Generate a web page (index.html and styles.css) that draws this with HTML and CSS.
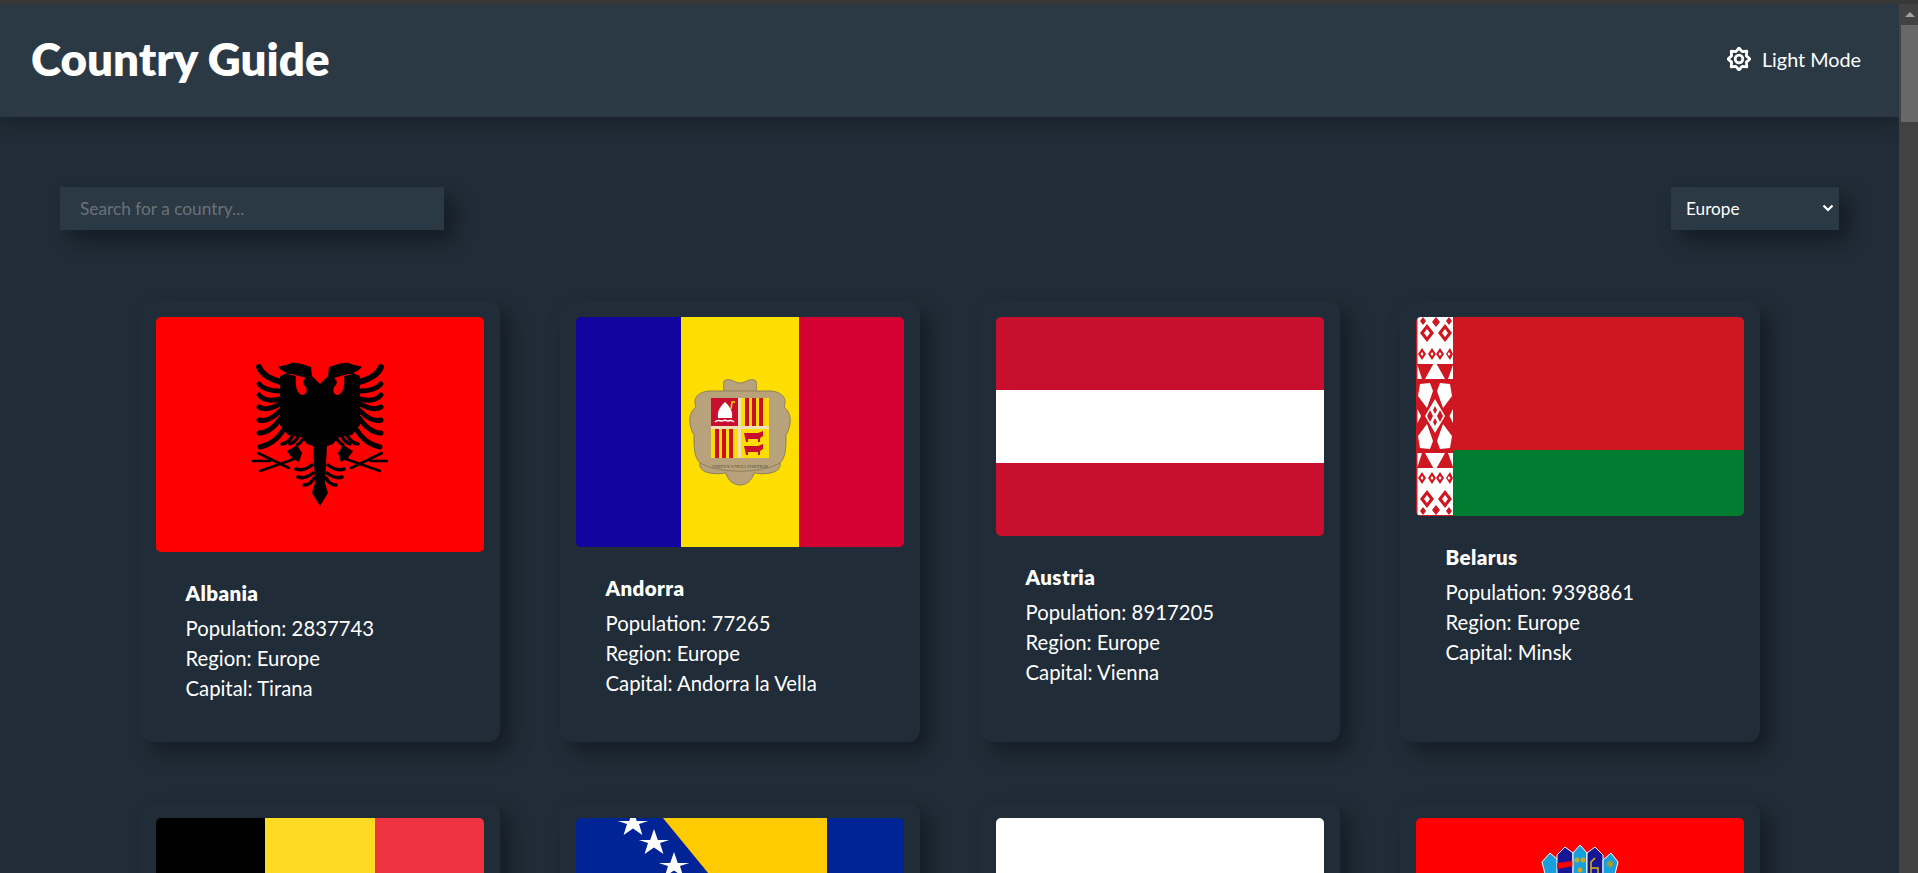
FILE: index.html
```html
<!DOCTYPE html>
<html lang="en">
<head>
<meta charset="utf-8">
<title>Country Guide</title>
<link rel="stylesheet" href="styles.css">
</head>
<body>
<div class="chrome-strip"></div>
<div class="viewport">
  <div class="page">
    <header class="site-header">
      <h1 class="site-title">Country Guide</h1>
      <button class="mode-toggle" type="button">
        <svg class="mode-icon" viewBox="0 0 24 24" aria-hidden="true"><path d="M12 1L15.100 4.600 19.800 4.200 19.400 8.900 23 12 19.400 15.100 19.800 19.800 15.100 19.400 12 23 8.900 19.400 4.200 19.800 4.600 15.100 1 12 4.600 8.900 4.200 4.200 8.900 4.600Z"/><circle cx="12" cy="12" r="3.800"/></svg>
        <span>Light Mode</span>
      </button>
    </header>
    <main class="content">
      <div class="controls">
        <input class="search" type="text" placeholder="Search for a country...">
        <div class="select-box"><span>Europe</span>
          <svg class="chevron" viewBox="0 0 12 8" aria-hidden="true"><path d="M1.500 1.500L6 6l4.500-4.500"/></svg>
        </div>
      </div>
      <div class="grid">
        <article class="card">
          <svg class="flag" viewBox="0 0 328 235" aria-hidden="true">
            <rect width="328" height="235" fill="#f00"/>
            <g id="eagle-half" class="eagle">
              <path class="eagle-fill" d="M164 67 L156 59 L155 50 L146 47 L137 45.500 L130 48 L122 49.500 L125 53 L131 56 L124 59 L124 108 L132 118 L145 120 L151 127 L157 129 L159 166 L156 176 L164 189Z"/>
              <path class="eagle-cut" d="M131 57 L140 59 C139 66 140 76 146 78 C151 78 152 72 149 69 C146 66 147 63 150 61 L136 57Z"/>
              <path class="eagle-fill" d="M131 134 L141 128 L146 136 L143 145 L136 141Z"/>
              <path class="feather f1" d="M103 50 C106 58 114 62 125 65"/>
              <path class="feather" d="M103 67 C108 73 116 74 124 74"/>
              <path class="feather" d="M103 78 C108 84 116 84 124 82"/>
              <path class="feather" d="M103 90 C110 94 118 90 124 87"/>
              <path class="feather" d="M103 103 C110 105 118 100 124 94"/>
              <path class="feather" d="M103 116 C112 116 120 108 125 101"/>
              <path class="feather" d="M104 130 C114 128 122 122 128 112"/>
              <path class="feather small" d="M126 127 C132 126 136 121 138 116"/>
              <path class="feather small" d="M134 127 C139 125 142 121 143 117"/>
              <path class="feather small" d="M141 128 C145 126 148 121 148 118"/>
              <path class="leg" d="M141 141 L104 154 M102 136 L133 151 M97 144 L114 144"/>
              <path class="feather small" d="M140 152 C146 154 151 152 156 148"/>
              <path class="feather small" d="M142 160 C148 162 152 160 157 156"/>
              <path class="feather small" d="M148 168 C152 168 156 165 158 161"/>
            </g>
            <use href="#eagle-half" transform="matrix(-1 0 0 1 328 0)"/>
          </svg>
          <div class="card-body">
            <h2 class="name">Albania</h2>
            <p class="fact">Population: 2837743</p>
            <p class="fact">Region: Europe</p>
            <p class="fact">Capital: Tirana</p>
          </div>
        </article>
        <article class="card">
          <svg class="flag" viewBox="0 0 328 230" aria-hidden="true">
            <rect width="105" height="230" fill="#10069f"/>
            <rect x="105" width="118" height="230" fill="#fedd00"/>
            <rect x="223" width="105" height="230" fill="#d50032"/>
            <path fill="#b7a27c" stroke="#8f7d5c" d="M164 84 C150 84 146 76 148 64 C154 60 158 66 164 66 C170 66 174 60 180 64 C182 76 178 84 164 84Z"/>
            <path fill="#b7a27c" stroke="#8f7d5c" d="M135 74 L193 74 C204 74 212 80 208 90 C216 96 216 108 210 118 C210 130 210 140 204 146 C206 156 190 158 178 156 C176 164 170 168 164 168 C158 168 152 164 150 156 C138 158 122 156 124 146 C118 140 118 130 118 118 C112 108 112 96 120 90 C116 80 124 74 135 74Z"/>
            <rect x="135" y="81" width="58" height="60" fill="#efdfb8"/>
            <rect x="135" y="81" width="27" height="28" fill="#c8102e"/>
            <path fill="#fff" d="M142 101 C141 93 145 89 149 85 C153 89 157 93 156 101Z"/>
            <path fill="none" stroke="#fff" stroke-width="1.500" d="M139 105 C143 101 145 106 149 103 C152 106 154 101 158 105"/>
            <path fill="none" stroke="#fedd00" stroke-width="1.500" d="M155 92 L156 85 L159 85"/>
            <rect x="165" y="81" width="28" height="28" fill="#fedd00"/>
            <path fill="#c8102e" d="M169 81h4v28h-4zM176 81h4v28h-4zM183 81h4v28h-4z"/>
            <rect x="135" y="112" width="27" height="29" fill="#fedd00"/>
            <path fill="#c8102e" d="M139 112h4v29h-4zM146 112h4v29h-4zM153 112h4v29h-4z"/>
            <rect x="165" y="112" width="28" height="29" fill="#fedd00"/>
            <path fill="#c8102e" d="M168 116h14l5-2v5l-3 2v4h-2v-3h-10v3h-2zM168 129h14l5-2v5l-3 2v4h-2v-3h-10v3h-2z"/>
            <path fill="none" stroke="#8f7d5c" d="M124 146 C145 157 183 157 204 146"/>
            <text class="motto" x="164" y="151" text-anchor="middle">VIRTVS VNITA FORTIOR</text>
          </svg>
          <div class="card-body">
            <h2 class="name">Andorra</h2>
            <p class="fact">Population: 77265</p>
            <p class="fact">Region: Europe</p>
            <p class="fact">Capital: Andorra la Vella</p>
          </div>
        </article>
        <article class="card">
          <svg class="flag" viewBox="0 0 328 219" aria-hidden="true">
            <rect width="328" height="219" fill="#c8102e"/>
            <rect y="73" width="328" height="73" fill="#fff"/>
          </svg>
          <div class="card-body">
            <h2 class="name">Austria</h2>
            <p class="fact">Population: 8917205</p>
            <p class="fact">Region: Europe</p>
            <p class="fact">Capital: Vienna</p>
          </div>
        </article>
        <article class="card">
          <svg class="flag" viewBox="0 0 328 199" aria-hidden="true">
            <rect width="328" height="133" fill="#ce1720"/>
            <rect y="133" width="328" height="66" fill="#007c30"/>
            <rect width="38" height="199" fill="#ce1720"/>
            <g id="by-half">
              <path fill="#fff" d="M1.500 0H37V47H1.500Z"/>
              <path fill="#fff" d="M19 44L29 62H9ZM1.500 48L6 62H1.500ZM37 48L32 62H37Z"/>
              <path fill="#ce1720" d="M11 7l7 9-7 9-7-9zM29 7l7 9-7 9-7-9zM20 0l4 5-4 5-4-5zM7 0l3 4-3 4-3-4zM33 0l3 4-3 4-3-4z"/>
              <path fill="#fff" d="M11 12l3 4-3 4-3-4zM29 12l3 4-3 4-3-4z"/>
              <path fill="#ce1720" d="M6 31l4 6-4 6-4-6zM16 31l4 6-4 6-4-6zM24 31l4 6-4 6-4-6zM34 31l3 6-3 6-4-6z"/>
              <path fill="#fff" d="M6 35l1.500 2-1.500 2-1.500-2zM16 35l1.500 2-1.500 2-1.500-2zM24 35l1.500 2-1.500 2-1.500-2zM33 35l1.500 2-1.500 2-1.500-2z"/>
              <path fill="#fff" d="M4 67L14 66 17 74 11 91 2 79ZM34 67L24 66 21 74 27 91 36 79ZM19 82L29 99H9ZM1.500 92L5 99H1.500ZM37 92L33.500 99H37Z"/>
              <path fill="#ce1720" d="M6 62h26v3H6zM14 93l3 6h-6zM24 93l3 6h-6zM19 89l2 4-2 4-2-4z"/>
            </g>
            <use href="#by-half" transform="matrix(1 0 0 -1 0 198)"/>
          </svg>
          <div class="card-body">
            <h2 class="name">Belarus</h2>
            <p class="fact">Population: 9398861</p>
            <p class="fact">Region: Europe</p>
            <p class="fact">Capital: Minsk</p>
          </div>
        </article>
        <article class="card">
          <svg class="flag" viewBox="0 0 328 284" aria-hidden="true">
            <rect width="109" height="284" fill="#000"/>
            <rect x="109" width="110" height="284" fill="#fdda24"/>
            <rect x="219" width="109" height="284" fill="#ef3340"/>
          </svg>
          <div class="card-body">
            <h2 class="name">Belgium</h2>
            <p class="fact">Population: 11555997</p>
            <p class="fact">Region: Europe</p>
            <p class="fact">Capital: Brussels</p>
          </div>
        </article>
        <article class="card">
          <svg class="flag" viewBox="0 0 328 164" aria-hidden="true">
            <rect width="328" height="164" fill="#002395"/>
            <path fill="#fecb00" d="M87 0H251V200Z"/>
            <defs><path id="ba-star" fill="#fff" d="M0-16L3.800-5H15.200L6-1.900 9.400 9 0 2.400-9.400 9-6-1.900-15.200-5H-3.800Z"/></defs>
            <use href="#ba-star" x="57" y="8"/>
            <use href="#ba-star" x="78" y="27"/>
            <use href="#ba-star" x="98" y="50"/>
            <use href="#ba-star" x="119" y="72"/>
          </svg>
          <div class="card-body">
            <h2 class="name">Bosnia and Herzegovina</h2>
            <p class="fact">Population: 3280815</p>
            <p class="fact">Region: Europe</p>
            <p class="fact">Capital: Sarajevo</p>
          </div>
        </article>
        <article class="card">
          <svg class="flag" viewBox="0 0 328 197" aria-hidden="true">
            <rect width="328" height="66" fill="#fff"/>
            <rect y="66" width="328" height="66" fill="#00966e"/>
            <rect y="132" width="328" height="65" fill="#d62612"/>
          </svg>
          <div class="card-body">
            <h2 class="name">Bulgaria</h2>
            <p class="fact">Population: 6927288</p>
            <p class="fact">Region: Europe</p>
            <p class="fact">Capital: Sofia</p>
          </div>
        </article>
        <article class="card">
          <svg class="flag" viewBox="0 0 328 164" aria-hidden="true">
            <rect width="328" height="164" fill="#f00"/>
            <path fill="#18a0dc" stroke="#fff" d="M126 44l8-9 8 7-1 26-8 4z"/>
            <path fill="#171796" stroke="#fff" d="M141 37l8-8 8 6v35h-16z"/>
            <path fill="#f00" d="M141 45l16-2v5l-16 3zM141 57l16-2v5l-16 3z"/>
            <path fill="#18a0dc" stroke="#fff" d="M157 35l7-8 7 8v35h-14z"/>
            <circle cx="161" cy="42" r="2.500" fill="#c8a820"/><circle cx="167" cy="42" r="2.500" fill="#c8a820"/><circle cx="164" cy="52" r="2.500" fill="#c8a820"/>
            <path fill="#171796" stroke="#fff" d="M171 35l8-6 8 8v33h-16z"/>
            <path fill="none" stroke="#e3b505" stroke-width="1.500" d="M175 60l0-16 4-4M175 50h7v10"/>
            <path fill="#18a0dc" stroke="#fff" d="M187 42l8-7 7 9-7 28-8-4z"/>
            <circle cx="194" cy="46" r="3" fill="#a89c28"/>
            <path fill="#fff" stroke="#111" stroke-width="1.500" d="M190 60l10-3M189 65l9-3"/>
          </svg>
          <div class="card-body">
            <h2 class="name">Croatia</h2>
            <p class="fact">Population: 4047200</p>
            <p class="fact">Region: Europe</p>
            <p class="fact">Capital: Zagreb</p>
          </div>
        </article>
      </div>
    </main>
  </div>
  <div class="scrollbar" aria-hidden="true">
    <div class="scroll-arrow"></div>
    <div class="scroll-thumb"></div>
  </div>
</div>
</body>
</html>
```
FILE: styles.css
```css
* { box-sizing: border-box; }
html, body { margin: 0; height: 100%; overflow: hidden; }
body {
  display: flex;
  flex-direction: column;
  background: #202c37;
  color: #fff;
  font-family: "Lato", "Noto Sans", sans-serif;
}
.chrome-strip { height: 4px; flex: none; background: #383838; }
.viewport { flex: 1; display: flex; min-height: 0; }
.page { flex: 1; min-width: 0; overflow: hidden; }
.site-header {
  height: 113px;
  display: flex;
  align-items: center;
  justify-content: space-between;
  padding: 0 38px 3px 31px;
  background: #2b3945;
  box-shadow: 0 5px 20px rgba(0, 0, 0, .28);
  position: relative;
}
.site-title { margin: 0; font-size: 45.700px; font-weight: 800; line-height: 1; }
.mode-toggle {
  display: flex;
  align-items: center;
  gap: 11px;
  padding: 0;
  border: 0;
  background: none;
  color: #fff;
  font: inherit;
  font-size: 19.800px;
  font-weight: 400;
}
.mode-icon { width: 24px; height: 24px; fill: none; stroke: #fff; stroke-width: 2.800; stroke-linejoin: round; }
.content { padding: 70px 60px 0; }
.controls { display: flex; justify-content: space-between; }
.search {
  width: 384px;
  height: 43px;
  padding: 0 20px 1px;
  border: 0;
  outline: 0;
  background: #2b3945;
  color: #fff;
  font: inherit;
  font-size: 17.300px;
  box-shadow: 10px 10px 20px rgba(0, 0, 0, .38);
}
.search::placeholder { color: #6a7278; opacity: 1; }
.select-box {
  width: 168px;
  height: 43px;
  padding: 0 5px 1px 15px;
  display: flex;
  align-items: center;
  justify-content: space-between;
  background: #2b3945;
  font-size: 17.200px;
  box-shadow: 10px 10px 20px rgba(0, 0, 0, .38);
}
.chevron { width: 12px; height: 8px; fill: none; stroke: #fff; stroke-width: 2.200; }
.grid {
  display: grid;
  grid-template-columns: repeat(4, 360px);
  grid-auto-rows: 441px;
  justify-content: center;
  gap: 60px;
  margin-top: 71px;
}
.card {
  padding: 16px;
  border-radius: 12px;
  background: #202c37;
  box-shadow: 10px 10px 20px rgba(0, 0, 0, .35);
}
.flag { display: block; width: 100%; height: auto; border-radius: 5px; }
.card-body { padding: 30px 30px 0; }
.name { margin: 0 0 9px; font-size: 20.500px; font-weight: 800; line-height: 22px; letter-spacing: .4px; }
.fact { margin: 0; font-size: 20.300px; font-weight: 400; line-height: 30px; }
.motto { font-family: "Liberation Serif", serif; font-size: 5px; fill: #5b4e36; }
.eagle-fill { fill: #000; }
.eagle-cut { fill: #f00; }
.feather { fill: none; stroke: #000; stroke-width: 5; stroke-linecap: round; }
.feather.f1 { stroke-width: 6; }
.feather.small { stroke-width: 3.500; }
.leg { fill: none; stroke: #000; stroke-width: 2.500; stroke-linecap: round; }
.scrollbar { width: 19px; flex: none; background: #424242; position: relative; }
.scroll-arrow {
  width: 0;
  height: 0;
  margin: 8px auto 0;
  border: 5px solid transparent;
  border-top: 0;
  border-bottom: 5px solid #a3a3a3;
  transform: translateX(1px);
}
.scroll-thumb { height: 97px; margin: 8px 0 0 2px; background: #686868; }
```
